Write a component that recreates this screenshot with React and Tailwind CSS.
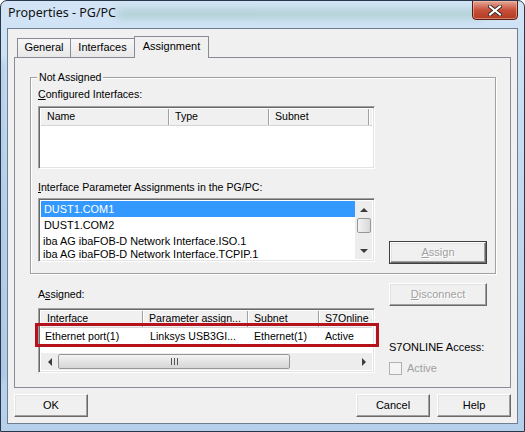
import React from 'react';

const raised =
  'border border-t-white border-l-white border-r-[#696969] border-b-[#696969] shadow-[inset_-1px_-1px_0_#a0a0a0,inset_1px_1px_0_#e3e3e3]';

const sunken =
  'border border-t-[#a0a0a0] border-l-[#a0a0a0] border-r-white border-b-white shadow-[inset_1px_1px_0_#696969,inset_-1px_-1px_0_#e3e3e3]';

const Btn = ({ children, className = '' }) => (
  <div className={`h-[23px] w-[74px] flex items-center justify-center bg-[#f0f0f0] ${raised} ${className}`}>
    {children}
  </div>
);

const HeaderCell = ({ children, w }) => (
  <div
    className={`h-[16px] flex items-center pl-[6px] border-r border-r-[#a0a0a0] shadow-[1px_0_0_#fff] whitespace-nowrap overflow-hidden shrink-0 ${w}`}
  >
    {children}
  </div>
);

const Arrow = ({ dir }) => {
  const pts = {
    up: '0,4 4,0 8,4',
    down: '0,0 8,0 4,4',
    left: '4,0 4,8 0,4',
    right: '0,0 0,8 4,4',
  }[dir];
  const v = dir === 'up' || dir === 'down';
  return (
    <svg width={v ? 8 : 4} height={v ? 4 : 8} viewBox={v ? '0 0 8 4' : '0 0 4 8'}>
      <polygon points={pts} fill="#3c3c3c" />
    </svg>
  );
};

export default function App() {
  return (
    <div className="w-[525px] h-[432px] bg-white">
      <div className="relative w-[525px] h-[432px] rounded-t-[7px] border border-[#28384a] bg-gradient-to-b from-[#d2e4f6] via-[#c2d8ef] to-[#b6cfeb] overflow-hidden font-['Liberation_Sans',Arial,sans-serif] text-[10.6px] text-black flex flex-col">
        {/* aero glass streak */}
        <div className="absolute left-[115px] top-[9px] w-[370px] h-[8px] rounded-full bg-[#6fa990] opacity-40 blur-[4px]" />
        <div className="absolute left-[-4px] top-[60px] w-[8px] h-[320px] bg-[#8fb2d8] opacity-40 blur-[3px]" />

        {/* title bar */}
        <div className="relative h-[27px] flex items-center pl-[7px] pb-[2px] text-[12.5px] font-['Noto_Sans',sans-serif] text-[#111]">
          Properties - PG/PC
        </div>
        <div className="absolute right-[6px] top-[-1px] w-[46px] h-[20px] rounded-b-[4px] border border-[#5a1d14] bg-gradient-to-b from-[#e2a898] via-[#c7503a] to-[#b33a22] shadow-[inset_0_0_0_1px_rgba(255,200,190,0.5)] flex items-center justify-center">
          <svg width="14" height="11" viewBox="0 0 14 11">
            <path d="M2 1.5 L12 9.5 M12 1.5 L2 9.5" stroke="#3d2a28" strokeWidth="4" strokeLinecap="square" />
            <path d="M2 1.5 L12 9.5 M12 1.5 L2 9.5" stroke="#ffffff" strokeWidth="2" strokeLinecap="square" />
          </svg>
        </div>

        {/* client area */}
        <div className="relative mx-[6px] h-[396px] border border-[#6f7f91] bg-[#f0f0f0] px-[6px] flex flex-col">
          {/* tabs */}
          <div className="mt-[7px] h-[21px] flex items-end pl-[3px] text-[11px]">
            <div className="h-[19px] w-[54px] flex items-center justify-center border border-b-0 border-[#898c95] bg-gradient-to-b from-[#f7f7f7] to-[#e8e8e8] pb-[1px]">
              General
            </div>
            <div className="h-[19px] w-[64px] flex items-center justify-center border border-l-0 border-b-0 border-[#898c95] bg-gradient-to-b from-[#f7f7f7] to-[#e8e8e8] pb-[1px]">
              Interfaces
            </div>
            <div className="relative z-10 -mb-px h-[22px] w-[75px] flex items-center justify-center border border-b-0 border-[#898c95] bg-[#f0f0f0] pb-[3px] ml-[-1px]">
              Assignment
            </div>
          </div>

          {/* tab panel */}
          <div className="h-[331px] border border-[#898c95] bg-[#f0f0f0] flex flex-col">
            {/* Not Assigned group */}
            <div className="relative ml-[15px] mt-[19px] w-[466px] h-[197px] border border-[#a0a0a0] shadow-[inset_1px_1px_0_#fff,1px_1px_0_#fff] pl-[7px] pt-[10px] flex">
              <div className="absolute left-[6px] top-[-7px] px-[2px] bg-[#f0f0f0] leading-[13px]">Not Assigned</div>
              <div className="w-[337px] flex flex-col">
                <div className="leading-[13px]">
                  <span className="underline">C</span>onfigured Interfaces:
                </div>
                <div className={`mt-[5px] h-[63px] bg-white ${sunken} p-[2px]`}>
                  <div className="flex bg-[#f0f0f0] border-b border-[#d5d5d5]">
                    <HeaderCell w="w-[128px]">Name</HeaderCell>
                    <HeaderCell w="w-[100px]">Type</HeaderCell>
                    <HeaderCell w="w-[100px]">Subnet</HeaderCell>
                  </div>
                </div>
                <div className="mt-[12px] leading-[13px]">
                  <span className="underline">I</span>nterface Parameter Assignments in the PG/PC:
                </div>
                <div className={`mt-[4px] h-[64px] bg-white ${sunken} p-[2px] flex`}>
                  <div className="flex-1 flex flex-col text-[10.9px]">
                    <div className="h-[16px] bg-[#3399ff] text-white flex items-center pl-[3px]">DUST1.COM1</div>
                    <div className="h-[16px] flex items-center pl-[3px]">DUST1.COM2</div>
                    <div className="h-[16px] flex items-center pl-[2px] whitespace-nowrap">iba AG ibaFOB-D Network Interface.ISO.1</div>
                    <div className="h-[12px] flex items-center pl-[2px] whitespace-nowrap overflow-hidden">iba AG ibaFOB-D Network Interface.TCPIP.1</div>
                  </div>
                  <div className="w-[17px] bg-[#ededed] flex flex-col items-center">
                    <div className="h-[17px] flex items-center justify-center">
                      <Arrow dir="up" />
                    </div>
                    <div className="w-[14px] h-[15px] rounded-[2px] border border-[#979797] bg-gradient-to-r from-[#f3f3f3] to-[#d8d8d8]" />
                    <div className="flex-1" />
                    <div className="h-[17px] flex items-center justify-center">
                      <Arrow dir="down" />
                    </div>
                  </div>
                </div>
              </div>
              <div className="ml-[14px] flex flex-col justify-end pb-[9px]">
                <div className="h-[23px] w-[98px] border border-[#404040] bg-[#f0f0f0] flex items-center justify-center">
                  <div className={`w-full h-full flex items-center justify-center ${raised} text-[#a0a0a0] text-[11px] [text-shadow:1px_1px_0_#fff]`}>
                    <span><span className="underline">A</span>ssign</span>
                  </div>
                </div>
              </div>
            </div>

            {/* Assigned section */}
            <div className="ml-[23px] flex">
              <div className="w-[337px] flex flex-col">
                <div className="mt-[14px] leading-[13px]">
                  A<span className="underline">s</span>signed:
                </div>
                <div className={`relative mt-[7px] h-[65px] bg-white ${sunken} p-[2px] flex flex-col`}>
                  <div className="flex bg-[#f0f0f0] border-b border-[#d5d5d5] overflow-hidden">
                    <HeaderCell w="w-[102px]">Interface</HeaderCell>
                    <HeaderCell w="w-[105px]">Parameter assign...</HeaderCell>
                    <HeaderCell w="w-[71px]">Subnet</HeaderCell>
                    <HeaderCell w="w-[60px]">S7Online a</HeaderCell>
                  </div>
                  <div className="h-[17px] flex items-center whitespace-nowrap">
                    <div className="w-[102px] pl-[4px]">Ethernet port(1)</div>
                    <div className="w-[105px] pl-[7px]">Linksys USB3GI...</div>
                    <div className="w-[71px] pl-[6px]">Ethernet(1)</div>
                    <div className="pl-[6px]">Active</div>
                  </div>
                  <div className="flex-1" />
                  <div className="h-[17px] bg-[#ededed] flex items-center">
                    <div className="w-[17px] flex items-center justify-center">
                      <Arrow dir="left" />
                    </div>
                    <div className="w-[232px] h-[15px] rounded-[2px] border border-[#979797] bg-gradient-to-b from-[#f3f3f3] to-[#d6d6d6] flex items-center justify-center gap-[2px]">
                      <div className="w-px h-[7px] bg-[#555]" />
                      <div className="w-px h-[7px] bg-[#555]" />
                      <div className="w-px h-[7px] bg-[#555]" />
                    </div>
                    <div className="flex-1" />
                    <div className="w-[17px] flex items-center justify-center">
                      <Arrow dir="right" />
                    </div>
                  </div>
                  {/* highlight */}
                  <div className="absolute left-[-4px] top-[14px] w-[344px] h-[24px] border-[3px] border-[#b5121b]" />
                </div>
              </div>
              <div className="ml-[14px] flex flex-col">
                <div className={`mt-[9px] h-[23px] w-[98px] flex items-center justify-center bg-[#f0f0f0] ${raised} text-[#a0a0a0] text-[11px] [text-shadow:1px_1px_0_#fff]`}>
                  <span><span className="underline">D</span>isconnect</span>
                </div>
                <div className="mt-[35px] leading-[13px] text-[11px]">S7ONLINE Access:</div>
                <div className="mt-[6px] flex items-center gap-[5px] text-[#a0a0a0] text-[11px]">
                  <div className="w-[13px] h-[13px] border border-[#b1b1b1] bg-[#f4f4f4]" />
                  <span>Active</span>
                </div>
              </div>
            </div>
          </div>

          {/* buttons */}
          <div className="mt-[6px] flex text-[11px]">
            <Btn>OK</Btn>
            <div className="flex-1" />
            <Btn>Cancel</Btn>
            <Btn className="ml-[7px]">Help</Btn>
          </div>
        </div>
      </div>
    </div>
  );
}
